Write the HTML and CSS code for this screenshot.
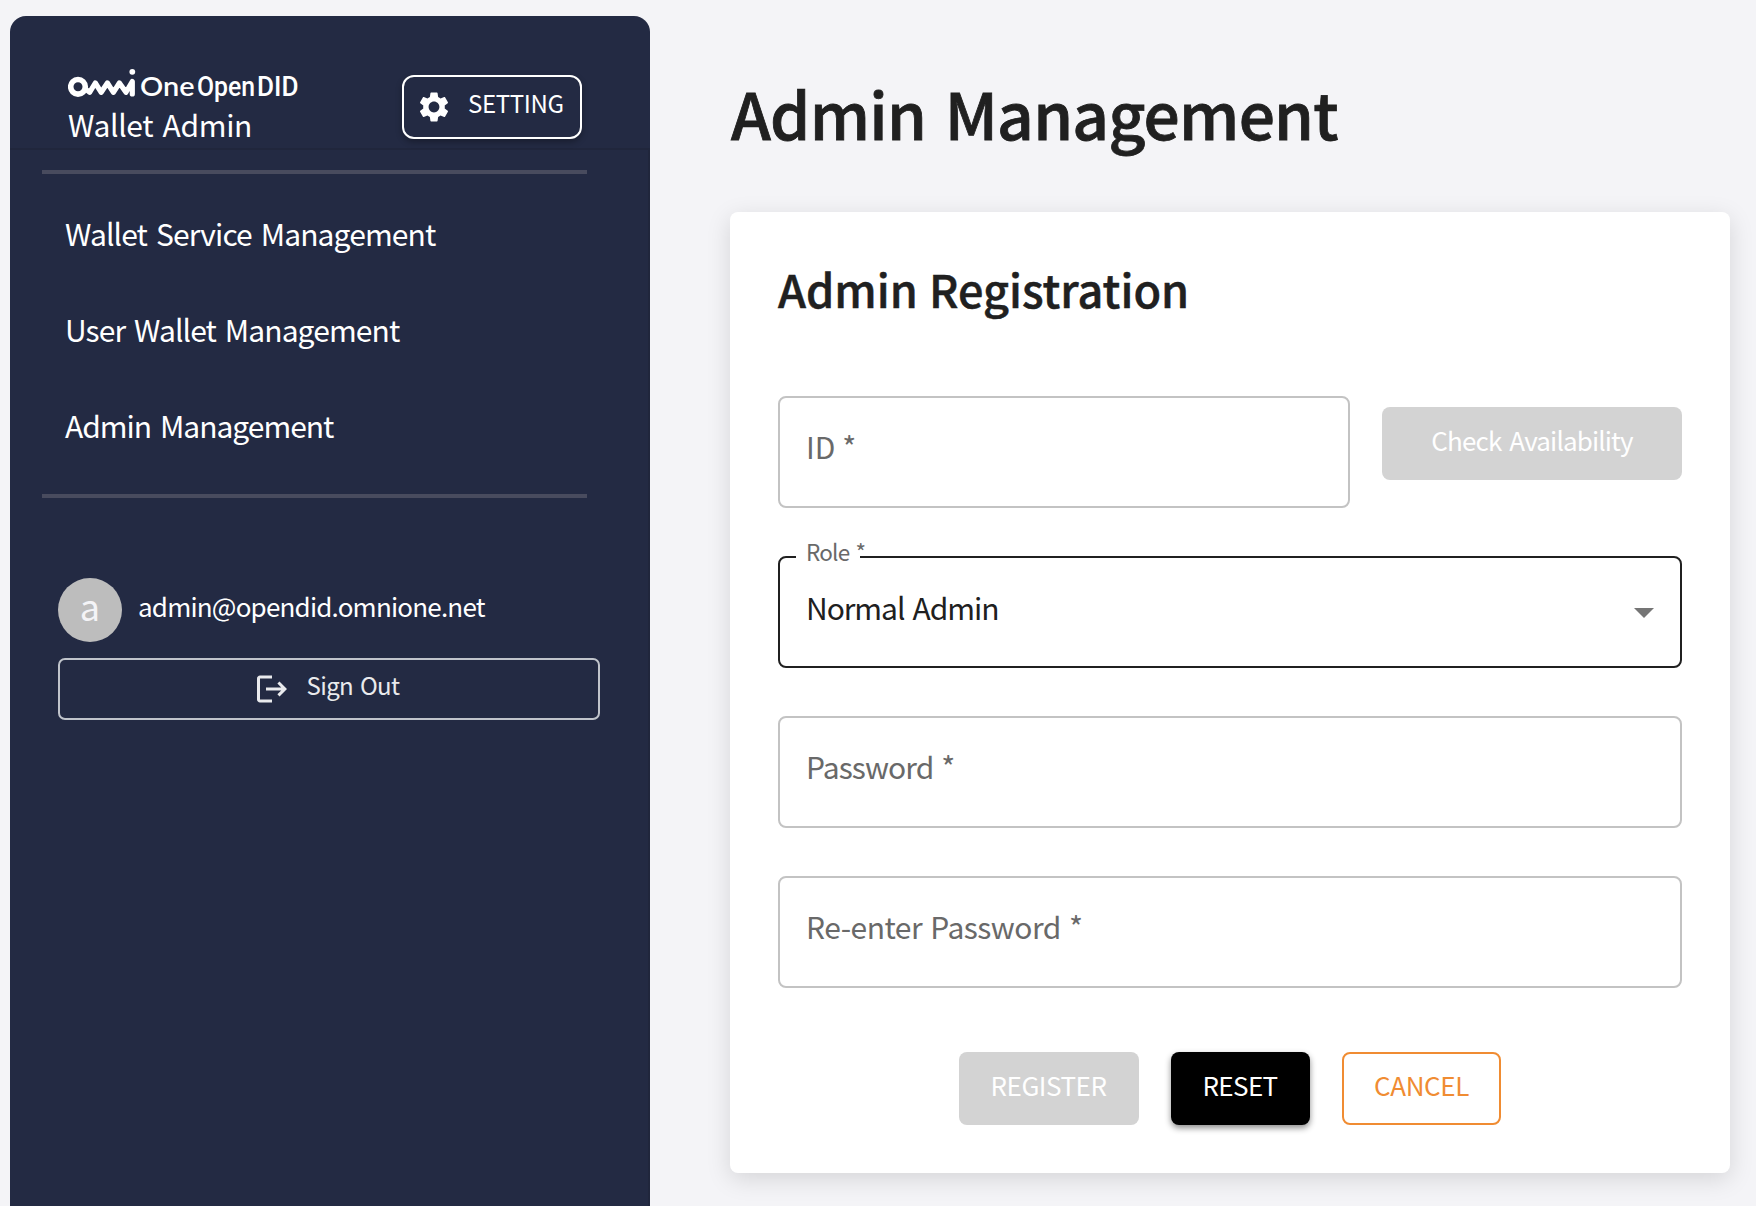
FILE: index.html
```html
<!DOCTYPE html>
<html lang="en">
<head>
<meta charset="utf-8">
<title>Admin Management</title>
<link rel="stylesheet" href="styles.css">
</head>
<body>
<div class="app">
  <aside class="sidebar">
    <header class="sidebar-header">
      <div class="brand">
        <svg class="logo" width="232" height="40" viewBox="0 0 232 40">
          <g fill="none" stroke="#fff" stroke-linecap="round" stroke-linejoin="round">
            <circle cx="10" cy="20.8" r="7.3" stroke-width="5.6"/>
            <path d="M17.5 23L21.6 26.3L27.3 17L33.2 26.3L39.4 17L45.4 26.3L51.4 17L58 26.3L64.3 15.5V28" stroke-width="5.2"/>
          </g>
          <circle cx="64.3" cy="5.8" r="2.9" fill="#fff"/>
          <text class="logo-one" x="72" y="30.4" textLength="54.5" lengthAdjust="spacingAndGlyphs">One</text>
          <text class="logo-open" x="129" y="30.4" textLength="58" lengthAdjust="spacingAndGlyphs">Open</text>
          <text class="logo-open" x="189" y="30.4" textLength="41.5" lengthAdjust="spacingAndGlyphs">DID</text>
        </svg>
        <div class="brand-name">Wallet Admin</div>
      </div>
      <button class="setting-btn">
        <svg width="36" height="36" viewBox="0 0 24 24" fill="currentColor"><path d="M19.14 12.94c.04-.3.06-.61.06-.94 0-.32-.02-.64-.07-.94l2.03-1.58c.18-.14.23-.41.12-.61l-1.92-3.32c-.12-.22-.37-.29-.59-.22l-2.39.96c-.5-.38-1.03-.7-1.62-.94l-.36-2.54c-.04-.24-.24-.41-.48-.41h-3.84c-.24 0-.43.17-.47.41l-.36 2.54c-.59.24-1.13.57-1.62.94l-2.39-.96c-.22-.08-.47 0-.59.22L2.74 8.87c-.12.21-.08.47.12.61l2.03 1.58c-.05.3-.09.63-.09.94s.02.64.07.94l-2.03 1.58c-.18.14-.23.41-.12.61l1.92 3.32c.12.22.37.29.59.22l2.39-.96c.5.38 1.03.7 1.62.94l.36 2.54c.05.24.24.41.48.41h3.84c.24 0 .44-.17.47-.41l.36-2.54c.59-.24 1.13-.56 1.62-.94l2.39.96c.22.08.47 0 .59-.22l1.92-3.32c.12-.22.07-.47-.12-.61l-2.01-1.58zM12 15.6c-1.98 0-3.6-1.62-3.6-3.6s1.62-3.6 3.6-3.6 3.6 1.62 3.6 3.6-1.62 3.6-3.6 3.6z"/></svg>
        <span>SETTING</span>
      </button>
    </header>
    <div class="sidebar-body">
      <div class="divider"></div>
      <nav class="nav">
        <a class="nav-item">Wallet Service Management</a>
        <a class="nav-item nav-user">User Wallet Management</a>
        <a class="nav-item nav-admin">Admin Management</a>
      </nav>
      <div class="divider"></div>
      <div class="account">
        <div class="account-row">
          <div class="avatar">a</div>
          <span class="email">admin@opendid.omnione.net</span>
        </div>
        <button class="signout-btn">
          <svg width="36" height="36" viewBox="0 0 24 24" fill="currentColor"><path d="m17 7-1.41 1.41L18.17 11H8v2h10.17l-2.58 2.58L17 17l5-5zM4 5h8V3H4c-1.1 0-2 .9-2 2v14c0 1.1.9 2 2 2h8v-2H4V5z"/></svg>
          <span>Sign Out</span>
        </button>
      </div>
    </div>
  </aside>
  <main class="main">
    <h1 class="page-title">Admin Management</h1>
    <section class="card">
      <h2 class="card-title">Admin Registration</h2>
      <div class="form">
        <div class="id-row">
          <div class="field"><span class="label-id">ID *</span></div>
          <button class="btn btn-disabled check-btn">Check Availability</button>
        </div>
        <div class="field field-select">
          <span class="floating-label">Role *</span>
          <span class="value">Normal Admin</span>
          <svg class="arrow" width="48" height="48" viewBox="0 0 24 24" fill="#757575"><path d="m7 10 5 5 5-5z"/></svg>
        </div>
        <div class="field"><span class="label-password">Password *</span></div>
        <div class="field"><span class="label-confirm">Re-enter Password *</span></div>
      </div>
      <div class="actions">
        <button class="btn btn-disabled register-btn">REGISTER</button>
        <button class="btn reset-btn">RESET</button>
        <button class="btn cancel-btn">CANCEL</button>
      </div>
    </section>
  </main>
</div>
</body>
</html>
```
FILE: styles.css
```css
* { box-sizing: border-box; }

body {
  margin: 0;
  background: #f4f4f7;
  color: #202020;
  font-family: "Noto Sans CJK KR", "Noto Sans", sans-serif;
  font-size: 30px;
  line-height: 36px;
}

button {
  font-family: inherit;
  margin: 0;
  padding: 0;
  background: none;
  white-space: nowrap;
}

svg { display: block; flex: none; }

.app {
  display: flex;
  height: 1206px;
  overflow: hidden;
}

/* Sidebar */
.sidebar {
  display: flex;
  flex-direction: column;
  flex: none;
  width: 640px;
  margin: 16px 0 0 10px;
  background: #232a43;
  color: #fff;
  border-radius: 16px 16px 0 0;
}

.sidebar-header {
  display: flex;
  justify-content: space-between;
  align-items: flex-start;
  height: 134px;
  padding: 50px 68px 0 58px;
  border-bottom: 2px solid #20263c;
}

.logo-one { font: 600 27px Lato, sans-serif; fill: #fff; }
.logo-open { font: 500 27px Roboto, sans-serif; fill: #fff; }

.brand-name { letter-spacing: -0.35px; word-spacing: 3px; }

.setting-btn {
  display: flex;
  align-items: center;
  gap: 16px;
  width: 180px;
  height: 64px;
  margin-top: 9px;
  padding-left: 12px;
  border: 2px solid #fff;
  border-radius: 12px;
  color: #fff;
  font-size: 24px;
  line-height: 36px;
  letter-spacing: -0.35px;
  box-shadow: 0 3px 6px rgba(0, 0, 0, .3);
}

.setting-btn span, .signout-btn span { padding-bottom: 9px; }

.sidebar-body {
  flex: 1;
  padding-top: 20px;
  border-right: 2px solid #20263c;
}

.divider {
  width: 545px;
  height: 4px;
  margin-left: 32px;
  background: #484b5e;
}

.nav {
  display: flex;
  flex-direction: column;
  padding: 11px 0 21px 55px;
  letter-spacing: -0.88px;
  word-spacing: 3px;
}

.nav-item { line-height: 96px; }
.nav-user { letter-spacing: -0.9px; }
.nav-admin { letter-spacing: -1px; }

.account {
  display: flex;
  flex-direction: column;
  gap: 16px;
  padding: 80px 0 0 48px;
}

.account-row {
  display: flex;
  align-items: center;
  gap: 16px;
}

.avatar {
  display: flex;
  align-items: center;
  justify-content: center;
  width: 64px;
  height: 64px;
  padding-bottom: 11px;
  border-radius: 50%;
  background: #bdbdbd;
  color: #f4f4f7;
  font-size: 36px;
}

.email {
  padding-bottom: 9px;
  font-size: 26px;
  letter-spacing: -0.8px;
}

.signout-btn {
  display: flex;
  align-items: center;
  justify-content: center;
  gap: 16px;
  width: 542px;
  height: 62px;
  padding-right: 4px;
  border: 2px solid #c0c4cb;
  border-radius: 7px;
  color: #e9eaed;
  font-size: 24px;
  line-height: 36px;
  letter-spacing: -0.6px;
  word-spacing: 2px;
}

/* Main area */
.main { padding: 80px 26px 0 80px; }

.page-title {
  margin: 0 0 68px 1px;
  font-size: 64px;
  line-height: 64px;
  font-weight: 500;
  letter-spacing: -0.75px;
  word-spacing: 5px;
  -webkit-text-stroke: 0.8px #202020;
}

.card {
  width: 1000px;
  height: 961px;
  padding: 47px 48px 48px;
  background: #fff;
  border-radius: 8px;
  box-shadow: 0 6px 24px rgba(0, 0, 0, .13);
}

.card-title {
  margin: 0 0 77px;
  font-size: 45px;
  line-height: 60px;
  font-weight: 500;
  word-spacing: 1px;
  -webkit-text-stroke: 0.5px #202020;
}

.form {
  display: flex;
  flex-direction: column;
  gap: 48px;
}

.id-row {
  display: grid;
  grid-template-columns: 572px 300px;
  gap: 32px;
  align-items: start;
}

.field {
  display: flex;
  align-items: center;
  height: 112px;
  padding: 0 10px 13px 26px;
  border: 2px solid #c3c3c3;
  border-radius: 8px;
  color: #696969;
}

.label-password { letter-spacing: -0.9px; word-spacing: 2px; }
.label-confirm { letter-spacing: -0.5px; word-spacing: 2px; }

.field-select {
  position: relative;
  justify-content: space-between;
  padding-bottom: 11px;
  border-color: #202020;
}

.value { color: #202020; letter-spacing: -1.05px; word-spacing: 2.5px; }

.arrow { margin-top: 10px; margin-right: 2px; }

/* The label sits on the border, over a gap that hides the line */
.floating-label {
  position: absolute;
  left: 26px;
  top: -25px;
  font-size: 22.5px;
  line-height: 36px;
  letter-spacing: -0.8px;
  word-spacing: 2px;
}

.field-select::before {
  content: "";
  position: absolute;
  left: 16px;
  top: -2px;
  width: 64px;
  height: 2px;
  background: #fff;
}

.btn {
  height: 73px;
  padding-bottom: 7px;
  border: 0;
  border-radius: 8px;
  font-size: 26px;
  line-height: 36px;
}

.btn-disabled { background: #d3d3d3; color: #fff; }

.check-btn { margin-top: 11px; letter-spacing: -0.84px; word-spacing: 3px; }

.actions {
  display: flex;
  justify-content: center;
  gap: 32px;
  margin-top: 64px;
}

.register-btn { width: 180px; padding-right: 1px; letter-spacing: -0.45px; }

.reset-btn {
  width: 139px;
  padding-right: 1px;
  background: #000;
  color: #fff;
  letter-spacing: -0.6px;
  box-shadow: 0 3px 6px rgba(0, 0, 0, .45);
}

.cancel-btn {
  width: 159px;
  border: 2px solid #f08c32;
  color: #f08c32;
  letter-spacing: -0.4px;
}
```
